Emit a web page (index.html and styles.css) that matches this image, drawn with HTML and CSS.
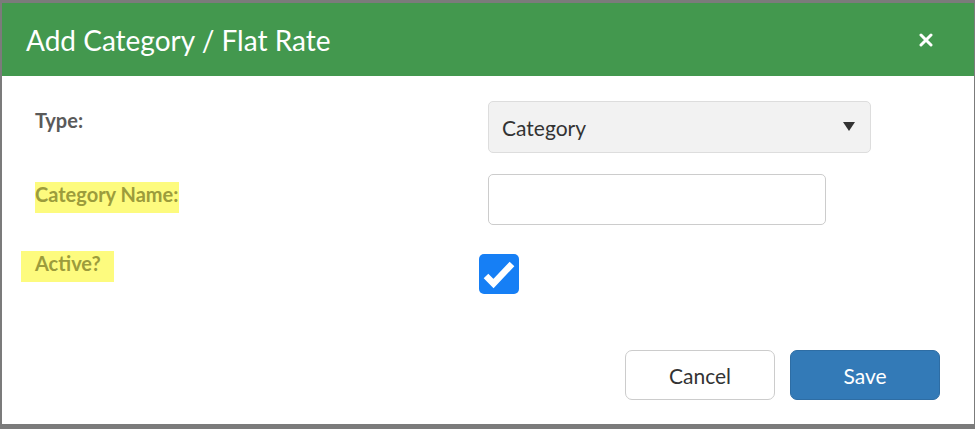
FILE: index.html
```html
<!DOCTYPE html>
<html lang="en">
<head>
    <meta charset="UTF-8">
    <meta name="viewport" content="width=device-width, initial-scale=1.0">
    <title>Add Category / Flat Rate</title>
    <link rel="stylesheet" href="styles.css">
</head>
<body>
    <div class="modal">
        <div class="modal-header">
            <h1>Add Category / Flat Rate</h1>
            <button class="close-btn" aria-label="Close">
                <svg width="14" height="14" viewBox="0 0 14 14">
                    <path d="M2 2 L12 12 M12 2 L2 12" stroke="#fff" stroke-width="3" stroke-linecap="round"/>
                </svg>
            </button>
        </div>

        <div class="modal-body">
            <div class="form-row row-type">
                <label for="type">Type:</label>
                <div class="select-wrap">
                    <select id="type">
                        <option>Category</option>
                        <option>Flat Rate</option>
                    </select>
                    <svg class="select-arrow" width="12" height="9" viewBox="0 0 12 9">
                        <path d="M0 0 H12 L6 9 Z" fill="#333"/>
                    </svg>
                </div>
            </div>

            <div class="form-row row-name">
                <label for="categoryName"><span class="highlight">Category Name:</span></label>
                <input type="text" id="categoryName">
            </div>

            <div class="form-row row-active">
                <label><span class="highlight highlight-wide">Active?</span></label>
                <span class="checkbox">
                    <svg width="40" height="40" viewBox="0 0 40 40">
                        <path d="M7 22 L14.5 29.5 L33 10" fill="none" stroke="#fff" stroke-width="6.5"/>
                    </svg>
                </span>
            </div>
        </div>

        <div class="modal-footer">
            <button class="btn btn-default">Cancel</button>
            <button class="btn btn-primary">Save</button>
        </div>
    </div>
</body>
</html>
```

FILE: styles.css
```css
html, body {
    height: 100%;
}

body {
    margin: 0;
    padding: 3px 1px 5px 2px;
    box-sizing: border-box;
    background: #7b7b7b;
    font-family: Lato, "Open Sans", sans-serif;
    overflow: hidden;
}

.modal {
    height: 100%;
    background: #fff;
    display: flex;
    flex-direction: column;
}

.modal-header {
    height: 73px;
    flex-shrink: 0;
    background: #43984e;
    display: flex;
    align-items: center;
    justify-content: space-between;
    padding: 0 41px 0 24px;
}

.modal-header h1 {
    margin: 0;
    font-size: 28px;
    font-weight: normal;
    color: #fff;
}

.close-btn {
    border: none;
    background: none;
    padding: 0;
    display: flex;
    cursor: pointer;
}

.modal-body {
    padding: 25px 34px 0 33px;
}

.form-row {
    display: flex;
    align-items: flex-start;
}

.form-row label {
    width: 453px;
    flex-shrink: 0;
    font-size: 20px;
    font-weight: bold;
    line-height: 25px;
    color: #5a5a5a;
}

.row-type {
    height: 52px;
    margin-bottom: 21px;
}

.row-type label {
    margin-top: 7px;
}

.row-name {
    height: 51px;
    margin-bottom: 29px;
}

.row-name label {
    margin-top: 8px;
}

.row-active label {
    margin-top: -3px;
}

.highlight {
    display: inline-block;
    background: #fdfb7e;
    color: #9c9c3c;
    padding: 0 1px 6px 0;
}

.highlight-wide {
    margin-left: -14px;
    padding: 0 13px 6px 14px;
}

.select-wrap {
    position: relative;
}

.select-wrap select {
    appearance: none;
    -webkit-appearance: none;
    width: 383px;
    height: 52px;
    padding: 0 13px;
    border: 1px solid #ddd;
    border-radius: 5px;
    background: #f2f2f2;
    font-family: inherit;
    font-size: 21px;
    color: #333;
}

.select-arrow {
    position: absolute;
    right: 16px;
    top: 21px;
    pointer-events: none;
}

.form-row input {
    width: 338px;
    height: 51px;
    box-sizing: border-box;
    border: 1px solid #ccc;
    border-radius: 5px;
    padding: 0 12px;
    font-family: inherit;
    font-size: 21px;
}

.checkbox {
    display: block;
    width: 40px;
    height: 40px;
    margin-left: -9px;
    border-radius: 5px;
    background: #167ff5;
}

.checkbox svg {
    display: block;
}

.modal-footer {
    margin-top: auto;
    display: flex;
    justify-content: flex-end;
    gap: 15px;
    padding: 0 34px 24px 0;
}

.btn {
    width: 150px;
    height: 50px;
    border-radius: 7px;
    font-family: inherit;
    font-size: 21px;
    cursor: pointer;
}

.btn-default {
    background: #fff;
    border: 1px solid #ccc;
    color: #333;
}

.btn-primary {
    background: #337ab7;
    border: 1px solid #2e6da4;
    color: #fff;
}
```
